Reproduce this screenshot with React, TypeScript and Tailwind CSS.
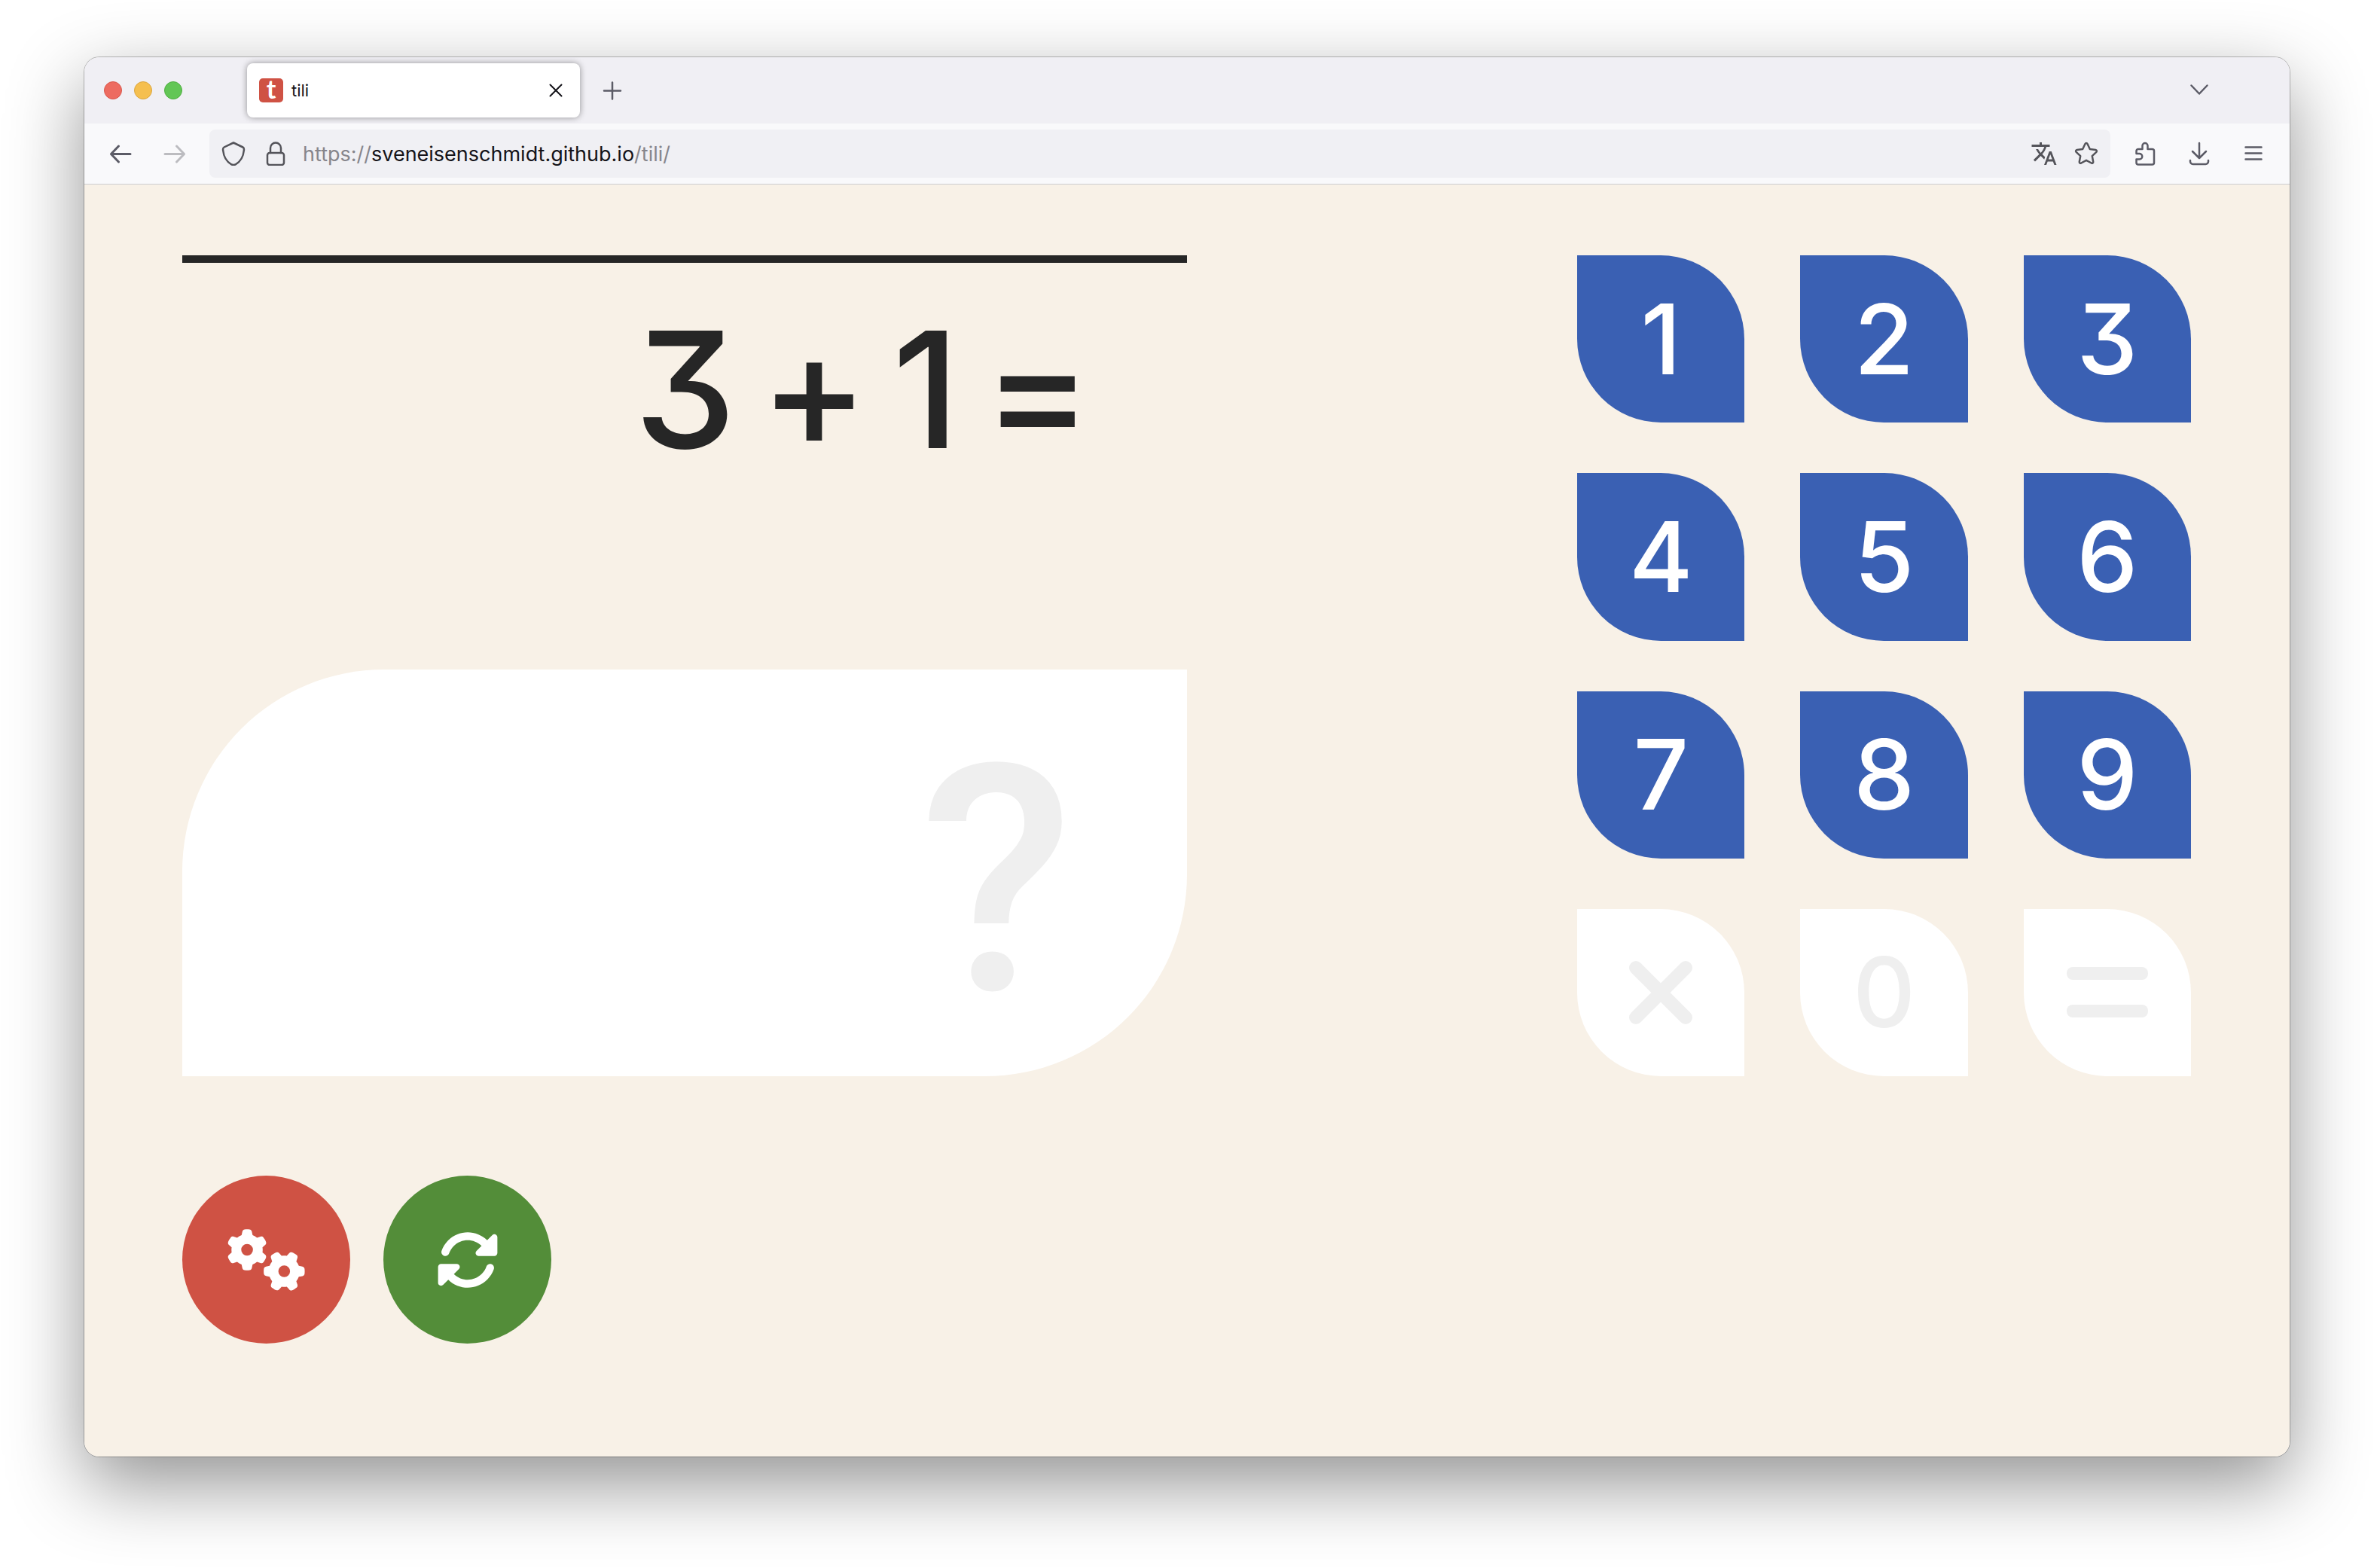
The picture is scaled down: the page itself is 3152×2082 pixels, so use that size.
import type { ReactNode } from "react";
import { FaGears, FaRotate } from "react-icons/fa6";

function Icon({ children, width = 2.5 }: { children: ReactNode; width?: number }) {
  return (
    <svg
      viewBox="0 0 32 32"
      className="size-8 shrink-0"
      fill="none"
      stroke="currentColor"
      strokeWidth={width}
      strokeLinecap="round"
      strokeLinejoin="round"
      aria-hidden="true"
    >
      {children}
    </svg>
  );
}

function ToolButton({ label, children, faded = false }: { label: string; children: ReactNode; faded?: boolean }) {
  return (
    <button
      type="button"
      aria-label={label}
      className={`flex h-16 w-16 shrink-0 items-center justify-center rounded-lg ${faded ? "text-[#bcbcc0]" : "text-[#5b5b66]"}`}
    >
      {children}
    </button>
  );
}

function FieldButton({ label, children }: { label: string; children: ReactNode }) {
  return (
    <button
      type="button"
      aria-label={label}
      className="flex h-16 w-14 shrink-0 items-center justify-center text-[#54545a]"
    >
      {children}
    </button>
  );
}

function TitleBar() {
  return (
    <header className="flex h-[88px] items-center bg-[#f0eff4] pr-[88px] pl-[26px]">
      <div className="flex gap-4">
        <button type="button" aria-label="Close window" className="size-6 rounded-full border border-[#d9574c] bg-[#ed6b60]" />
        <button type="button" aria-label="Minimize window" className="size-6 rounded-full border border-[#dba640] bg-[#f5bf4f]" />
        <button type="button" aria-label="Zoom window" className="size-6 rounded-full border border-[#4fae41] bg-[#62c655]" />
      </div>
      <div className="ml-[86px] flex h-[72px] w-[442px] items-center rounded-lg bg-white px-4 shadow-[0_0_8px_rgba(0,0,0,0.4)]">
        <span
          aria-hidden="true"
          className="flex size-8 items-center justify-center rounded-[5px] bg-[#cf5244] pb-1 font-['Lato'] text-[34px] leading-8 font-bold text-white"
        >
          t
        </span>
        <span className="ml-[11px] flex-1 font-['Inter',sans-serif] text-[22px] text-[#15141a]">tili</span>
        <button type="button" aria-label="Close tab" className="flex size-8 items-center justify-center text-[#15141a]">
          <Icon width={2}>
            <path d="M8.500 8.500l15 15M23.500 8.500l-15 15" />
          </Icon>
        </button>
      </div>
      <div className="ml-[11px] flex flex-1 justify-between">
        <ToolButton label="New tab">
          <Icon>
            <path d="M16 5.500v22M5 16.500h22" />
          </Icon>
        </ToolButton>
        <ToolButton label="List all tabs">
          <Icon>
            <path d="M5.500 9.500L16 20.500L26.500 9.500" />
          </Icon>
        </ToolButton>
      </div>
    </header>
  );
}

function ToolBar() {
  return (
    <nav className="flex h-[81px] items-center gap-2 border-b border-[#cccccf] bg-[#f9f9fb] px-4">
      <ToolButton label="Back">
        <Icon width={3}>
          <path d="M29 16.500H3.500M13.500 6L3.500 16.500L13.500 27" />
        </Icon>
      </ToolButton>
      <ToolButton label="Forward" faded>
        <Icon width={3}>
          <path d="M3 16.500h25.500M18.500 6l10 10.500L18.500 27" />
        </Icon>
      </ToolButton>
      <div className="mx-1.5 flex h-16 flex-1 items-center rounded-lg bg-[#f0f0f4] px-1">
        <FieldButton label="Tracking protection">
          <Icon>
            <path d="M16 1.500L28.500 7.500C30.500 8.500 30 10 29.800 12C29 20 26 26 19 30.200C17 31.300 15 31.300 13 30.200C6 26 3 20 2.200 12C2 10 1.500 8.500 3.500 7.500Z" />
          </Icon>
        </FieldButton>
        <FieldButton label="Site information">
          <Icon>
            <rect x="5" y="15" width="22" height="16" rx="3" />
            <path d="M9 15V8.500a7 7 0 0 1 14 0V15" />
          </Icon>
        </FieldButton>
        <div
          role="textbox"
          aria-label="Address"
          tabIndex={0}
          className="ml-2 flex-1 pt-0.5 font-['Inter',sans-serif] text-[27px] whitespace-nowrap text-[#87868c]"
        >
          https://<span className="text-[#15141a]">sveneisenschmidt.github.io</span>/tili/
        </div>
        <FieldButton label="Translate page">
          <svg viewBox="0 0 24 24" className="size-9" fill="currentColor" aria-hidden="true">
            <path d="M12.870 15.070l-2.540-2.510.030-.030c1.740-1.940 2.980-4.170 3.710-6.530H17V4h-7V2H8v2H1v1.990h11.170C11.500 7.920 10.440 9.750 9 11.350 8.070 10.320 7.300 9.190 6.690 8h-2c.730 1.630 1.730 3.170 2.980 4.560l-5.090 5.020L4 19l5-5 3.110 3.110.760-2.040zM18.500 10h-2L12 22h2l1.120-3h4.750L21 22h2l-4.500-12zm-2.620 7l1.620-4.330L19.120 17h-3.240z" />
          </svg>
        </FieldButton>
        <FieldButton label="Bookmark this page">
          <Icon>
            <path d="M14.500 3c.600-1.300 2.400-1.300 3 0l3.300 7 7.600 1c1.500.200 2 1.900 1 2.900l-5.600 5.300 1.400 7.600c.300 1.500-1.200 2.500-2.400 1.700L16 24.800l-6.800 3.700c-1.200.800-2.700-.200-2.400-1.700l1.400-7.600-5.600-5.300c-1-1-.500-2.700 1-2.900l7.600-1z" />
          </Icon>
        </FieldButton>
      </div>
      <ToolButton label="Extensions">
        <Icon>
          <path d="M4.500 16V12.500a2.500 2.500 0 0 1 2.500-2.500H12.500V5.500a3.500 3.500 0 0 1 7 0V10H25.500a2.500 2.500 0 0 1 2.500 2.500V28a2.500 2.500 0 0 1-2.500 2.500H7A2.500 2.500 0 0 1 4.500 28V23.500H8.500a3.750 3.750 0 0 0 0-7.500z" />
        </Icon>
      </ToolButton>
      <ToolButton label="Downloads">
        <Icon>
          <path d="M16 2v19.500M7 13l9 9 9-9M4 25v1.500A3.500 3.500 0 0 0 7.500 30h17a3.500 3.500 0 0 0 3.500-3.500V25" />
        </Icon>
      </ToolButton>
      <ToolButton label="Open application menu">
        <Icon>
          <path d="M5.500 7.500h21M5.500 15.500h21M5.500 23.500h21" />
        </Icon>
      </ToolButton>
    </nav>
  );
}

function Key({ label, disabled = false, children }: { label: string; disabled?: boolean; children: ReactNode }) {
  return (
    <button
      type="button"
      aria-label={label}
      disabled={disabled}
      className={`flex aspect-square items-center justify-center rounded-tr-[50%] rounded-bl-[50%] text-[129px] leading-none font-medium ${
        disabled ? "bg-white text-[#efefef]" : "bg-[#3a60b3] text-white"
      }`}
    >
      {children}
    </button>
  );
}

function Keypad() {
  return (
    <div className="grid w-[30.55%] grid-cols-3 gap-x-[74px] gap-y-[67px]">
      {["1", "2", "3", "4", "5", "6", "7", "8", "9"].map((n) => (
        <Key key={n} label={n}>
          {n}
        </Key>
      ))}
      <Key label="Clear" disabled>
        <svg viewBox="0 0 84 84" className="size-[84px]" stroke="currentColor" strokeWidth={18} strokeLinecap="round" aria-hidden="true">
          <path d="M9 9L75 75M75 9L9 75" />
        </svg>
      </Key>
      <Key label="0" disabled>
        0
      </Key>
      <Key label="Submit" disabled>
        <svg viewBox="0 0 108 68" className="h-[68px] w-[108px]" fill="currentColor" aria-hidden="true">
          <rect width="108" height="17" rx="8" />
          <rect y="50" width="108" height="17" rx="8" />
        </svg>
      </Key>
    </div>
  );
}

export default function App() {
  return (
    <div className="flex min-h-screen bg-white px-28 pt-[76px] pb-[148px]">
      <div className="flex flex-1 flex-col overflow-hidden rounded-[20px] shadow-[0_36px_100px_rgba(0,0,0,0.43),0_0_0_1px_rgba(0,0,0,0.25)]">
        <TitleBar />
        <ToolBar />
        <main className="flex-1 bg-[#f8f1e7] pt-[94px] pr-[131px] pl-[130px] font-['Inter',sans-serif] [font-feature-settings:'cv09']">
          <div className="flex justify-between">
            <section className="flex w-1/2 flex-col justify-between">
              <div className="flex items-center justify-end border-t-[10px] border-[#262626] pt-[58px] pr-[126px] text-[215px] leading-[220px] font-medium text-[#262626]">
                <span className="mr-8">3</span>
                <span className="mr-8">+</span>
                <span className="mr-8">1</span>
                <span>=</span>
              </div>
              <div className="flex h-[540px] items-center justify-end rounded-tl-[268px] rounded-br-[268px] bg-white pt-6 pr-[150px] font-['Roboto',sans-serif] text-[420px] leading-none font-medium text-[#efefef]">
                ?
              </div>
            </section>
            <Keypad />
          </div>
          <div className="mt-[132px] flex gap-11">
            <button
              type="button"
              aria-label="Settings"
              className="flex size-[223px] items-center justify-center rounded-full bg-[#cf5244] text-white"
            >
              <FaGears className="h-[83px] w-[104px]" />
            </button>
            <button
              type="button"
              aria-label="New question"
              className="flex size-[223px] items-center justify-center rounded-full bg-[#538d39] text-white"
            >
              <FaRotate className="size-[84px]" />
            </button>
          </div>
        </main>
      </div>
    </div>
  );
}
